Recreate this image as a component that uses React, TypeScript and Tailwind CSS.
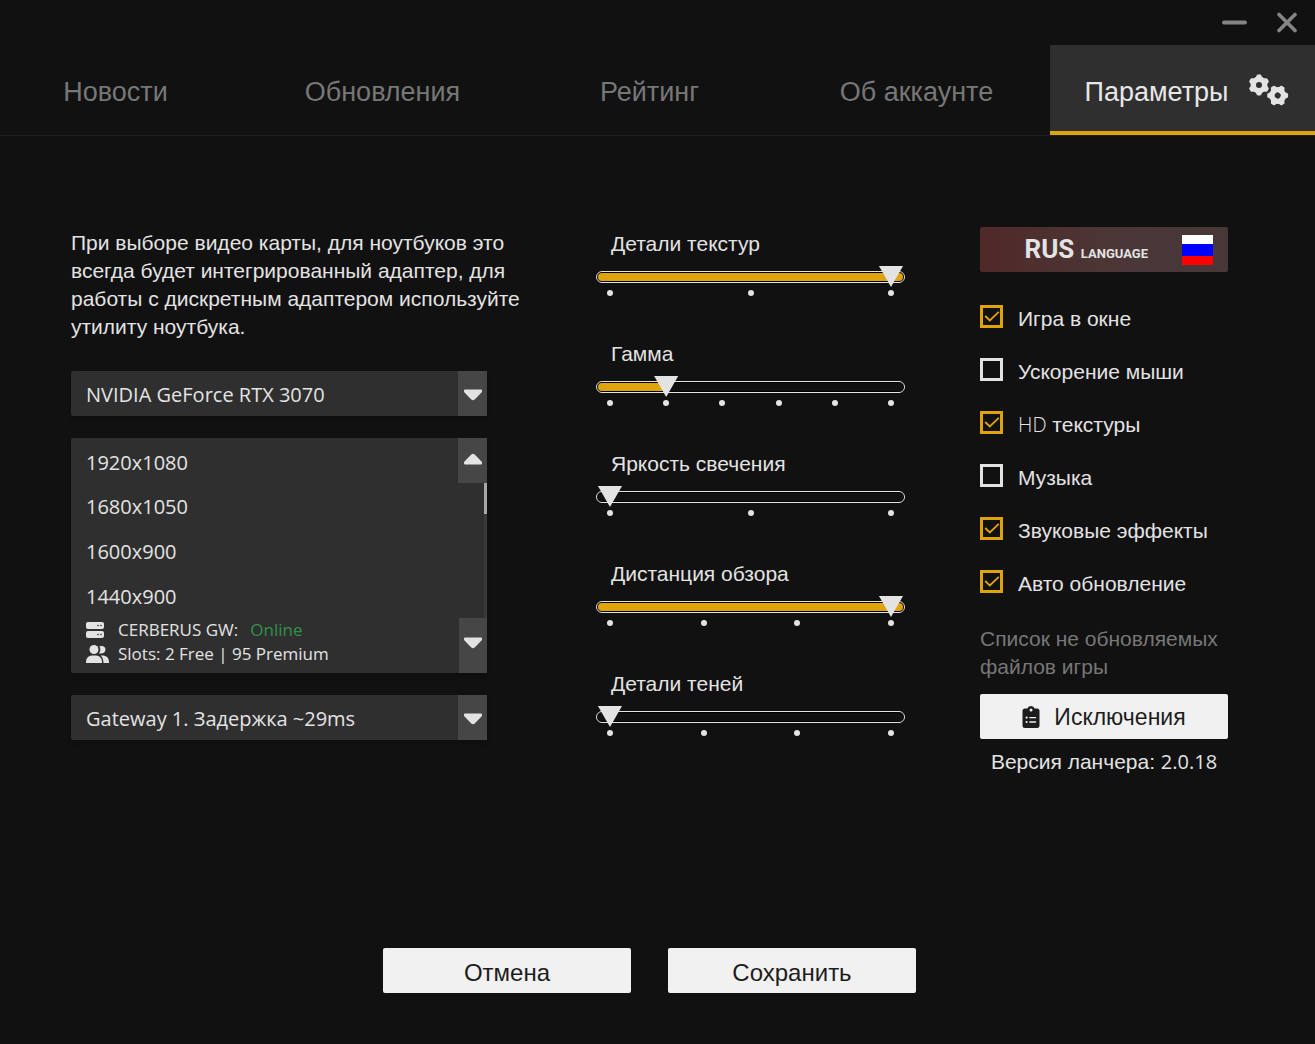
import { useState } from "react";
import type { ReactNode } from "react";

const latin = "font-['Open_Sans','Noto_Sans',sans-serif]";

function Tab({ children, first = false }: { children: ReactNode; first?: boolean }) {
  return (
    <a href="#" className={`flex items-center justify-center pt-1 ${first ? "pr-[18px]" : ""}`}>
      {children}
    </a>
  );
}

function Gear({ cx, cy, turn }: { cx: number; cy: number; turn: number }) {
  const teeth = [0, 60, 120, 180, 240, 300];
  return (
    <g transform={`translate(${cx} ${cy}) rotate(${turn})`}>
      <circle r="5.7" fill="none" stroke="currentColor" strokeWidth="5.4" />
      {teeth.map((a) => (
        <path
          key={a}
          d="M-3.8 -6.5 L-2.3 -9.6 Q-2.1 -10.4 -1.3 -10.4 L1.3 -10.4 Q2.1 -10.4 2.3 -9.6 L3.8 -6.5 Z"
          fill="currentColor"
          transform={`rotate(${a})`}
        />
      ))}
    </g>
  );
}

function Arrow({ up = false }: { up?: boolean }) {
  return (
    <svg viewBox="0 0 20 12" className={`h-3 w-5 ${up ? "rotate-180" : ""}`} aria-hidden="true">
      <path
        d="M2 1.5 H18 V2.5 L11 9.8 Q10 10.7 9 9.8 L2 2.5 Z"
        fill="#e3e3e3"
        stroke="#e3e3e3"
        strokeWidth="2"
        strokeLinejoin="round"
      />
    </svg>
  );
}

function Dropdown({ label, value }: { label: string; value: string }) {
  return (
    <div className="relative">
      <select
        aria-label={label}
        className="block h-[45px] w-full appearance-none rounded-xs bg-[#2f2f2f] pt-0.5 pr-10 pl-[15px] font-['Open_Sans','Noto_Sans',sans-serif] text-[20px] shadow-md"
      >
        <option>{value}</option>
      </select>
      <span className="pointer-events-none absolute inset-y-0 right-0 flex w-[29px] items-center justify-center bg-[#464646] pt-0.5">
        <Arrow />
      </span>
    </div>
  );
}

function Resolution() {
  return (
    <div className="flex flex-col rounded-xs bg-[#2f2f2f] font-['Open_Sans','Noto_Sans',sans-serif] text-[20px] shadow-md">
      <button type="button" aria-haspopup="listbox" aria-expanded="true" className="flex h-[45px] justify-between">
        <span className="self-center pt-1 pl-[15px]">1920x1080</span>
        <span className="flex w-[29px] items-center justify-center self-stretch bg-[#464646] pb-1">
          <Arrow up />
        </span>
      </button>
      <div className="flex">
        <ul role="listbox" aria-label="Разрешение экрана" className="flex-1">
          {["1680x1050", "1600x900", "1440x900"].map((r) => (
            <li key={r} role="option" aria-selected="false" className="flex h-[45px] items-center pt-0.5 pl-[15px]">
              {r}
            </li>
          ))}
        </ul>
        <div className="w-[3px] bg-[#3a3a3a]">
          <div className="h-[31px] bg-[#a8a8a8]" />
        </div>
      </div>
      <div className="flex justify-between text-[17px] leading-6">
        <div className="pl-[15px]">
          <p className="flex items-center">
            <svg viewBox="0 0 18 16" className="mr-[14px] h-4 w-[18px]" fill="#e3e3e3" aria-hidden="true">
              <rect width="18" height="7" rx="2" />
              <rect y="9" width="18" height="7" rx="2" />
              <g fill="#2f2f2f">
                <circle cx="12" cy="3.5" r="0.8" />
                <circle cx="15" cy="3.5" r="0.8" />
                <circle cx="12" cy="12.5" r="0.8" />
                <circle cx="15" cy="12.5" r="0.8" />
              </g>
            </svg>
            CERBERUS GW: <span className="ml-3 text-[#32914a]">Online</span>
          </p>
          <p className="flex items-center">
            <svg viewBox="0 0 23 18" className="mr-[9px] h-[18px] w-[23px]" fill="#e3e3e3" aria-hidden="true">
              <circle cx="8" cy="4.5" r="4.5" />
              <path d="M0 18 V16.5 Q0.5 11 6 10.5 H10 Q15.5 11 16 16.5 V18 Z" />
              <path d="M13 8.4 Q15.6 4.5 13.3 1.2 Q19.2 -0.2 19.5 4.6 Q19.2 9.4 13 8.4 Z" />
              <path d="M14.8 10.5 H17.5 Q22.6 11.2 23 16.5 V18 H17.4 V16.5 Q17.2 12.8 14.8 10.5 Z" />
            </svg>
            Slots: 2 Free | 95 Premium
          </p>
        </div>
        <button type="button" aria-label="Список шлюзов" className="flex h-[55px] w-7 items-center justify-center bg-[#464646] pb-1.5">
          <Arrow />
        </button>
      </div>
    </div>
  );
}

function Slider({ label, steps, start }: { label: string; steps: number; start: number }) {
  const [value, setValue] = useState(start);
  const max = steps - 1;
  const fill = value === 0 ? "0px" : value === max ? "100%" : `calc(14px + (100% - 28px) * ${value / max})`;
  return (
    <label className="flex h-[110px] flex-col">
      <span className="pl-[15px] leading-7">{label}</span>
      <span className="mt-2 grid items-center">
        <span className="col-start-1 row-start-1 block h-3 rounded-full border border-[#e3e3e3] bg-black p-px">
          <span className="block h-2 rounded-full bg-[#111]">
            <span className="block h-2 rounded-full bg-[#dfa30b]" style={{ width: fill }} />
          </span>
        </span>
        <input
          type="range"
          min={0}
          max={max}
          value={value}
          onChange={(e) => setValue(Number(e.target.value))}
          className="col-start-1 row-start-1 h-[21px] w-full appearance-none bg-transparent [&::-webkit-slider-thumb]:h-[21px] [&::-webkit-slider-thumb]:w-7 [&::-webkit-slider-thumb]:appearance-none [&::-webkit-slider-thumb]:bg-[#e3e3e3] [&::-webkit-slider-thumb]:[clip-path:polygon(7%_0,93%_0,50%_100%)]"
        />
      </span>
      <span className="mt-[3px] flex justify-between px-[11px]">
        {Array.from({ length: steps }, (_, i) => (
          <span key={i} className="size-1.5 rounded-full bg-[#e3e3e3]" />
        ))}
      </span>
    </label>
  );
}

function Check({ children, on = false }: { children: ReactNode; on?: boolean }) {
  return (
    <label className="flex h-[53px] items-start">
      <span className="grid">
        <input
          type="checkbox"
          defaultChecked={on}
          className="peer col-start-1 row-start-1 size-[23px] appearance-none border-3 border-[#e3e3e3] checked:border-[#dfa30b]"
        />
        <svg
          viewBox="0 0 23 23"
          className="pointer-events-none invisible col-start-1 row-start-1 size-[23px] peer-checked:visible"
          fill="none"
          stroke="#dfa30b"
          strokeWidth="1.8"
          aria-hidden="true"
        >
          <path d="M5.2 11 L9.8 15.4 L18.8 6.8" />
        </svg>
      </span>
      <span className="pl-[15px] leading-7">{children}</span>
    </label>
  );
}

export default function App() {
  return (
    <div className="flex min-h-screen flex-col bg-[#111] font-['Liberation_Sans',Arial,sans-serif] text-[21px] text-[#e3e3e3]">
      <div className="flex h-[45px] items-center justify-end gap-[29px] pr-[17px] text-[#858585]">
        <button type="button" aria-label="Свернуть">
          <svg viewBox="0 0 26 22" className="h-[22px] w-[26px]" aria-hidden="true">
            <path d="M3 10.5 H24" stroke="currentColor" strokeWidth="4" strokeLinecap="round" />
          </svg>
        </button>
        <button type="button" aria-label="Закрыть">
          <svg viewBox="0 0 22 22" className="size-[22px]" aria-hidden="true">
            <path d="M3 2.5 L19 18.5 M19 2.5 L3 18.5" stroke="currentColor" strokeWidth="3.6" strokeLinecap="round" />
          </svg>
        </button>
      </div>
      <nav className="grid h-[91px] grid-cols-[249fr_267fr_267fr_267fr_265fr] border-b border-[#202020] text-[27px] text-[#777]">
        <Tab first>Новости</Tab>
        <Tab>Обновления</Tab>
        <Tab>Рейтинг</Tab>
        <Tab>Об аккаунте</Tab>
        <a
          href="#"
          aria-current="page"
          className="flex items-center justify-center gap-[21px] border-b-4 border-[#dfa30b] bg-[#2f2f2f] pt-1 pl-[9px] text-[#e8e8e8]"
        >
          <span className="pt-1">Параметры</span>
          <svg viewBox="0 0 40 32" className="h-8 w-10 text-[#e3e3e3]" aria-hidden="true">
            <Gear cx={10} cy={11} turn={0} />
            <Gear cx={28.7} cy={21.5} turn={30} />
          </svg>
        </a>
      </nav>

      <main className="grid grid-cols-[525fr_384fr_248fr] pt-[91px] pr-[87px] pl-[71px]">
        <section className="flex flex-col gap-[22px] pt-0.5 pr-[109px]">
          <p className="-mr-14 leading-7">
            При выборе видео карты, для ноутбуков это всегда будет интегрированный адаптер, для работы с дискретным
            адаптером используйте утилиту ноутбука.
          </p>
          <div className="pt-2">
            <Dropdown label="Видеокарта" value="NVIDIA GeForce RTX 3070" />
          </div>
          <Resolution />
          <Dropdown label="Шлюз" value="Gateway 1. Задержка ~29ms" />
        </section>

        <section className="flex flex-col pt-[3px] pr-[75px]">
          <Slider label="Детали текстур" steps={3} start={2} />
          <Slider label="Гамма" steps={6} start={1} />
          <Slider label="Яркость свечения" steps={3} start={0} />
          <Slider label="Дистанция обзора" steps={4} start={3} />
          <Slider label="Детали теней" steps={4} start={0} />
        </section>

        <section className="flex flex-col">
          <button
            type="button"
            className="flex h-[45px] items-center justify-end gap-[34px] rounded-xs bg-linear-to-r from-[#502828] via-[#4b3636] to-[#473838] pr-[15px] font-[Roboto,sans-serif]"
          >
            <span className="text-[26px] font-bold">
              RUS <span className="text-[13px]">LANGUAGE</span>
            </span>
            <svg viewBox="0 0 31 30" className="h-[30px] w-[31px]" aria-hidden="true">
              <rect width="31" height="10" fill="#fff" />
              <rect y="9" width="31" height="12" fill="#00f" />
              <rect y="21" width="31" height="9" fill="#f00" />
            </svg>
          </button>
          <div className="flex flex-col pt-[33px]">
            <Check on>Игра в окне</Check>
            <Check>Ускорение мыши</Check>
            <Check on>
              <span className="font-['Open_Sans','Noto_Sans',sans-serif] text-[20px] leading-none font-light">HD</span>{" "}
              текстуры
            </Check>
            <Check>Музыка</Check>
            <Check on>Звуковые эффекты</Check>
            <Check on>Авто обновление</Check>
          </div>
          <p className="pt-0.5 leading-7 text-[#777]">Список не обновляемых файлов игры</p>
          <button
            type="button"
            className="mt-[13px] flex h-[45px] items-center justify-center gap-[14px] rounded-xs bg-[#f1f1f1] text-[23px] text-[#1d1d1d]"
          >
            <svg viewBox="0 0 18 22" className="h-[22px] w-[18px]" aria-hidden="true">
              <path
                d="M3 2.5 H5.4 Q6 0 9 0 Q12 0 12.6 2.5 H15 Q17.5 2.5 17.5 5 V19.5 Q17.5 22 15 22 H3 Q0.5 22 0.5 19.5 V5 Q0.5 2.5 3 2.5 Z"
                fill="currentColor"
              />
              <g fill="#f1f1f1">
                <circle cx="9" cy="4" r="1.5" />
                <circle cx="4.6" cy="11.6" r="1.1" />
                <circle cx="4.6" cy="16" r="1.1" />
                <rect x="7.2" y="10.9" width="7" height="1.4" rx="0.6" />
                <rect x="7.2" y="15.3" width="7" height="1.4" rx="0.6" />
              </g>
            </svg>
            <span className="pt-0.5">Исключения</span>
          </button>
          <p className="pt-[9px] text-center leading-7">
            Версия ланчера: <span className={`${latin} text-[20px] leading-none`}>2.0.18</span>
          </p>
        </section>
      </main>

      <footer className="mt-auto flex justify-center gap-[37px] pr-4 pb-[51px] text-[24px] text-[#1d1d1d]">
        <button type="button" className="h-[45px] w-[248px] rounded-xs bg-[#f1f1f1] pt-1">
          Отмена
        </button>
        <button type="button" className="h-[45px] w-[248px] rounded-xs bg-[#f1f1f1] pt-1">
          Сохранить
        </button>
      </footer>
    </div>
  );
}
